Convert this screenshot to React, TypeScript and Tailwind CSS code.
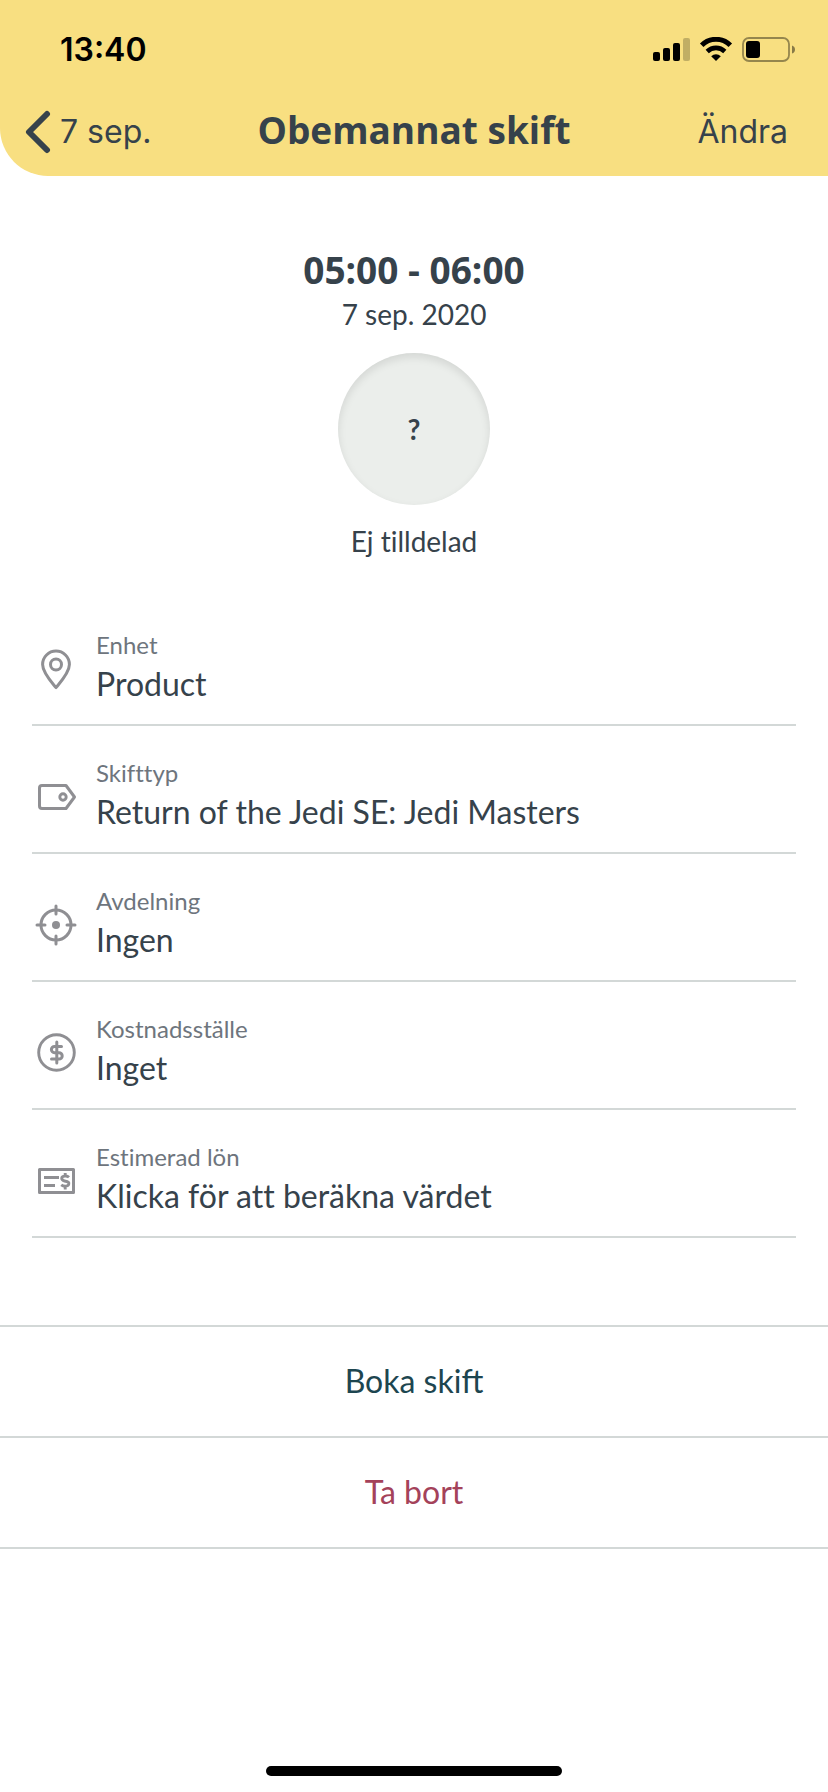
import React from "react";

interface Detail {
  label: string;
  value: string;
  icon: React.ReactNode;
  action?: boolean;
}

const PinIcon = () => (
  <svg viewBox="0 0 48 48" className="size-12" fill="none" stroke="currentColor" strokeWidth="3">
    <path d="M24 42.600C19 36.500 10.600 27.500 10.600 19.500A13.400 13.400 0 0 1 37.400 19.500C37.400 27.500 29 36.500 24 42.600Z" strokeLinejoin="round" />
    <circle cx="24" cy="19.500" r="5.500" />
  </svg>
);

const TagIcon = () => (
  <svg viewBox="0 0 48 48" className="size-12" fill="none" stroke="currentColor" strokeWidth="3" strokeLinejoin="round">
    <path d="M10 12.500H34L42.500 24L34 35.500H10Q7.500 35.500 7.500 33V15Q7.500 12.500 10 12.500Z" />
    <circle cx="31" cy="24" r="3.200" strokeWidth="2.900" />
  </svg>
);

const TargetIcon = () => (
  <svg viewBox="0 0 48 48" className="size-12" fill="none" stroke="currentColor" strokeWidth="3" strokeLinecap="round">
    <circle cx="24" cy="24" r="15" />
    <circle cx="24" cy="24" r="4" fill="currentColor" stroke="none" />
    <path d="M24 5v8M24 35v8M5 24h8M35 24h8" />
  </svg>
);

const DollarIcon = () => (
  <svg viewBox="0 0 48 48" className="size-12" fill="none" stroke="currentColor" strokeWidth="3" strokeLinecap="round" strokeLinejoin="round">
    <circle cx="24.500" cy="23.500" r="17.800" strokeWidth="2.900" />
    <path d="M24.800 13v21M29.500 17.500h-7a3 3 0 0 0 0 6.200h4.500a3.200 3.200 0 0 1 0 6.400h-7.500" />
  </svg>
);

const PayslipIcon = () => (
  <svg viewBox="0 0 48 48" className="size-12" fill="none" stroke="currentColor" strokeWidth="3">
    <rect x="7.500" y="12.500" width="34" height="23" strokeLinejoin="round" />
    <path d="M12 20.500h15M12 28.500h11" />
    <path d="M37 20.200q-1.500-1.400-4-1.200c-4.500.4-4 4.200-.500 5 4.500 1 4.800 1.500 4.200 3.400-.8 2.400-5.200 2.200-7.500.4M33.200 16v3.500M33.200 29v3.500" strokeWidth="2.900" />
  </svg>
);

const details: Detail[] = [
  { label: "Enhet", value: "Product", icon: <PinIcon /> },
  { label: "Skifttyp", value: "Return of the Jedi SE: Jedi Masters", icon: <TagIcon /> },
  { label: "Avdelning", value: "Ingen", icon: <TargetIcon /> },
  { label: "Kostnadsställe", value: "Inget", icon: <DollarIcon /> },
  { label: "Estimerad lön", value: "Klicka för att beräkna värdet", icon: <PayslipIcon />, action: true },
];

const StatusBar = () => (
  <div className="flex h-[100px] items-center justify-between pl-[60px] pr-8">
    <span className="font-['Inter',sans-serif] text-[32px] font-semibold leading-10 text-black">13:40</span>
    <div className="flex items-center gap-[9px] text-black">
      <svg viewBox="0 0 38 26" className="h-[26px] w-[38px]" fill="currentColor">
        <rect x="1" y="15" width="7" height="9" rx="2" />
        <rect x="11" y="11" width="7" height="13" rx="2" />
        <rect x="21" y="6" width="7" height="18" rx="2" />
        <rect x="31" y="1" width="7" height="23" rx="2" opacity="0.220" />
      </svg>
      <svg viewBox="0 0 34 26" className="h-[26px] w-[34px]" fill="none" stroke="currentColor">
        <path d="M2.700 8.200a20.300 20.300 0 0 1 28.600 0" strokeWidth="5" />
        <path d="M8.200 14.500a12.600 12.600 0 0 1 17.600 0" strokeWidth="4.600" />
        <path d="M12.200 19.200a7 7 0 0 1 9.600 0L17 24Z" fill="currentColor" stroke="none" />
      </svg>
      <svg viewBox="0 0 54 26" className="h-[26px] w-[54px]">
        <rect x="1" y="1" width="46" height="23" rx="6" fill="none" stroke="currentColor" strokeWidth="1.800" opacity="0.400" />
        <rect x="4" y="4" width="14" height="17" rx="3" fill="currentColor" />
        <path d="M50 8.500q3 1 3 4t-3 4Z" fill="currentColor" opacity="0.450" />
      </svg>
    </div>
  </div>
);

export default function App() {
  return (
    <div className="flex min-h-screen flex-col bg-white font-['Lato',sans-serif] text-[#36424b]">
      <header className="h-44 rounded-bl-[48px] bg-[#f8df81]">
        <StatusBar />
        <nav className="grid h-16 grid-cols-[1fr_auto_1fr] items-center">
          <button className="flex items-center gap-2 justify-self-start pl-6 font-['Inter',sans-serif] text-[32px] leading-10">
            <svg viewBox="0 0 28 44" className="h-11 w-7" fill="none" stroke="currentColor" strokeWidth="6" strokeLinecap="round" strokeLinejoin="round">
              <path d="M23 4L5 22L23 40" />
            </svg>
            7 sep.
          </button>
          <h1 className="pb-1 font-['Open_Sans',sans-serif] text-[37px] font-bold leading-10">Obemannat skift</h1>
          <button className="justify-self-end pr-10 font-['Inter',sans-serif] text-[32px] leading-10">
            Ändra
          </button>
        </nav>
      </header>

      <section className="flex flex-col items-center pt-[70px] [font-variant-ligatures:none]">
        <p className="font-['Open_Sans',sans-serif] text-[37px] font-bold leading-[48px]">05:00 - 06:00</p>
        <p className="text-[28px] leading-10">7 sep. 2020</p>
        <div className="mt-[19px] flex size-[152px] items-center justify-center rounded-full bg-[#ebeeeb] text-[28px] font-bold shadow-[inset_0_4px_8px_rgba(0,0,0,0.1)]">
          ?
        </div>
        <p className="mt-4 text-[28px] leading-10">Ej tilldelad</p>
      </section>

      <ul className="mx-8 mt-[37px] [font-variant-ligatures:none]">
        {details.map((d) => (
          <li key={d.label} className="flex items-center gap-4 border-b-2 border-[#d3d8d7] pb-4 pt-8">
            <span className="text-[#8f8f93]">{d.icon}</span>
            <div className="flex flex-col items-start">
              <span className="text-[24px] leading-[30px] text-[#6e757d]">{d.label}</span>
              {d.action ? (
                <button className="text-[32px] leading-[48px]">{d.value}</button>
              ) : (
                <span className="text-[32px] leading-[48px]">{d.value}</span>
              )}
            </div>
          </li>
        ))}
      </ul>

      <div className="mt-[87px] flex flex-col border-t-2 border-[#d3d8d7] text-[32px] leading-10">
        <button className="h-[111px] border-b-2 border-[#d3d8d7] pb-[2px] text-[#1d4650]">Boka skift</button>
        <button className="h-[111px] border-b-2 border-[#d3d8d7] pb-[2px] text-[#a4425a]">Ta bort</button>
      </div>

      <div className="mt-auto flex justify-center pb-4">
        <div className="h-[10px] w-[296px] rounded-full bg-black" />
      </div>
    </div>
  );
}
